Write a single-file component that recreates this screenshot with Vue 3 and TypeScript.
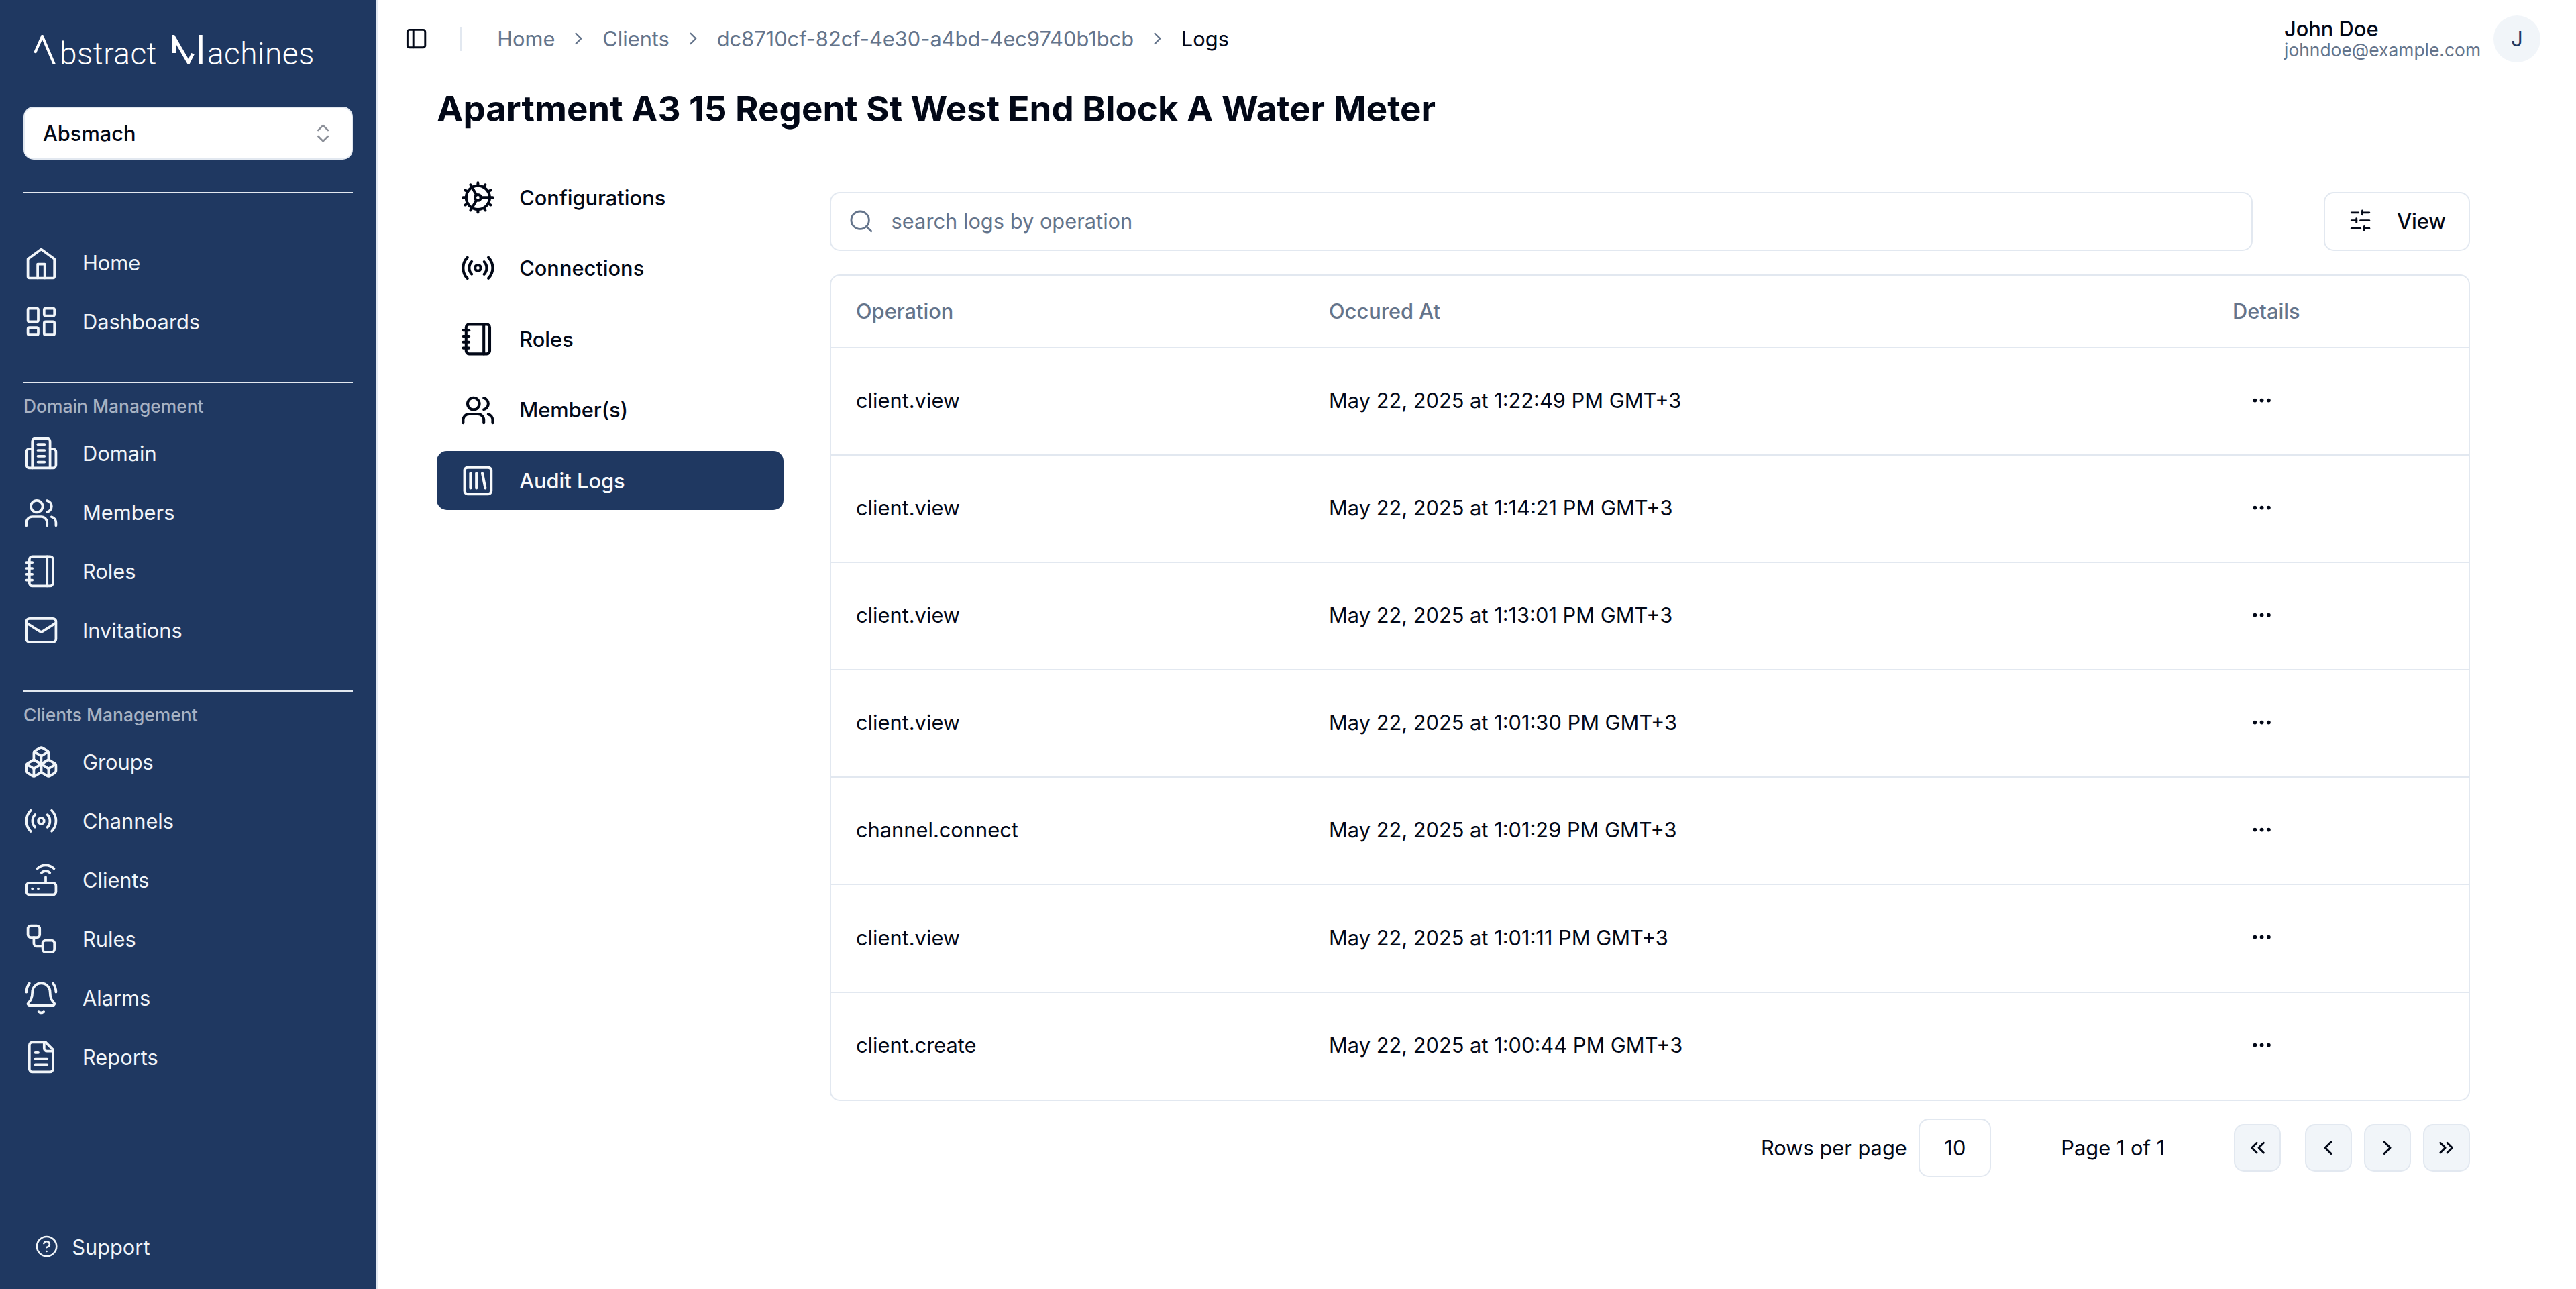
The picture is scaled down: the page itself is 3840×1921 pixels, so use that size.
<script setup lang="ts">
interface NavItem {
  label: string;
  icon: string;
}

interface LogRow {
  operation: string;
  occurredAt: string;
}

const p = (...ds: string[]) => ds.map((d) => `<path d="${d}"/>`).join('');

const icons: Record<string, string> = {
  home: p('M3 9.5 12 3l9 6.5v12a1 1 0 0 1-1 1H4a1 1 0 0 1-1-1Z', 'M9.6 22.5V13h4.8v9.5'),
  dashboards:
    '<rect width="7" height="9" x="3" y="3" rx="1"/><rect width="7" height="5" x="14" y="3" rx="1"/><rect width="7" height="9" x="14" y="12" rx="1"/><rect width="7" height="5" x="3" y="16" rx="1"/>',
  domain: p(
    'M6 22V4a2 2 0 0 1 2-2h8a2 2 0 0 1 2 2v18',
    'M6 9H4a2 2 0 0 0-2 2v9a2 2 0 0 0 2 2h16a2 2 0 0 0 2-2v-9a2 2 0 0 0-2-2h-2',
    'M9.75 6h4.5',
    'M9.75 10h4.5',
    'M9.75 14h4.5',
    'M9.75 18h4.5'
  ),
  members:
    p('M16 21v-2a4 4 0 0 0-4-4H6a4 4 0 0 0-4 4v2', 'M22 21v-2a4 4 0 0 0-3-3.87', 'M16 4.13a4 4 0 0 1 0 7.75') +
    '<circle cx="9" cy="8" r="4"/>',
  roles:
    p('M2 6h4', 'M2 10h4', 'M2 14h4', 'M2 18h4', 'M16 2v20') + '<rect width="16" height="20" x="4" y="2" rx="2"/>',
  invitations:
    '<rect width="20" height="16" x="2" y="4" rx="2"/>' + p('m22 7-8.97 5.7a1.94 1.94 0 0 1-2.06 0L2 7'),
  groups: p(
    'M2.97 12.92A2 2 0 0 0 2 14.63v3.24a2 2 0 0 0 .97 1.71l3 1.8a2 2 0 0 0 2.06 0L12 19v-5.5l-5-3-4.03 2.42Z',
    'm7 16.5-4.74-2.85',
    'm7 16.5 5-3',
    'M7 16.5v5.17',
    'M12 13.5V19l3.97 2.38a2 2 0 0 0 2.06 0l3-1.8a2 2 0 0 0 .97-1.71v-3.24a2 2 0 0 0-.97-1.71L17 10.5l-5 3Z',
    'm17 16.5-5-3',
    'm17 16.5 4.74-2.85',
    'M17 16.5v5.17',
    'M7.97 4.42A2 2 0 0 0 7 6.13v4.37l5 3 5-3V6.13a2 2 0 0 0-.97-1.71l-3-1.8a2 2 0 0 0-2.06 0l-3 1.8Z',
    'M12 8 7.26 5.15',
    'm12 8 4.74-2.85',
    'M12 13.5V8'
  ),
  channels:
    p(
      'M4.9 19.1C1 15.2 1 8.8 4.9 4.9',
      'M7.8 16.2c-2.3-2.3-2.3-6.1 0-8.5',
      'M16.2 7.8c2.3 2.3 2.3 6.1 0 8.5',
      'M19.1 4.9C23 8.8 23 15.1 19.1 19'
    ) + '<circle cx="12" cy="12" r="2"/>',
  clients:
    '<rect width="20" height="8" x="2" y="14" rx="2"/>' +
    p('M6.01 18H6', 'M10.01 18H10', 'M15 10v4', 'M17.84 7.17a4 4 0 0 0-5.66 0', 'M20.66 4.34a8 8 0 0 0-11.31 0'),
  rules:
    '<rect width="8" height="8" x="3" y="3" rx="2"/><rect width="8" height="8" x="13" y="13" rx="2"/>' +
    p('M7 11v4a2 2 0 0 0 2 2h4'),
  alarms: p(
    'M10.268 21a2 2 0 0 0 3.464 0',
    'M22 8c0-2.3-.8-4.3-2-6',
    'M3.262 15.326A1 1 0 0 0 4 17h16a1 1 0 0 0 .74-1.673C19.41 13.956 18 12.499 18 8A6 6 0 0 0 6 8c0 4.499-1.411 5.956-2.738 7.326',
    'M4 2C2.8 3.7 2 5.7 2 8'
  ),
  reports: p(
    'M15 2H6a2 2 0 0 0-2 2v16a2 2 0 0 0 2 2h12a2 2 0 0 0 2-2V7Z',
    'M14 2v4a2 2 0 0 0 2 2h4',
    'M10 9H8',
    'M16 13H8',
    'M16 17H8'
  ),
  support: '<circle cx="12" cy="12" r="10"/>' + p('M9.09 9a3 3 0 0 1 5.83 1c0 2-3 3-3 3', 'M12 17h.01'),
  cog: p(
    'M12 20a8 8 0 1 0 0-16 8 8 0 0 0 0 16Z',
    'M12 14a2 2 0 1 0 0-4 2 2 0 0 0 0 4Z',
    'M12 2v2',
    'M12 22v-2',
    'm17 20.66-1-1.73',
    'M11 10.27 7 3.34',
    'm20.66 17-1.73-1',
    'm3.34 7 1.73 1',
    'M14 12h8',
    'M2 12h2',
    'm20.66 7-1.73 1',
    'm3.34 17 1.73-1',
    'm17 3.34-1 1.73',
    'M11 13.73l-4 6.93'
  ),
  audit: '<rect width="18" height="18" x="3" y="3" rx="2"/>' + p('M7 7v10', 'M11 7v10', 'm15 7 2 10'),
  panel: '<rect width="18" height="18" x="3" y="3" rx="2"/>' + p('M9 3v18'),
  updown: p('m7 15 5 5 5-5', 'm7 9 5-5 5 5'),
  chevron: p('m9 18 6-6-6-6'),
  search: '<circle cx="11" cy="11" r="8"/>' + p('m21 21-4.3-4.3'),
  sliders: p('M21 4h-7', 'M10 4H3', 'M21 12h-9', 'M8 12H3', 'M21 20h-5', 'M12 20H3', 'M14 2v4', 'M8 10v4', 'M16 18v4'),
  dots: '<circle cx="12" cy="12" r="1"/><circle cx="19" cy="12" r="1"/><circle cx="5" cy="12" r="1"/>',
  first: p('m11 17-5-5 5-5', 'm18 17-5-5 5-5'),
  prev: p('m15 18-6-6 6-6'),
  next: p('m9 18 6-6-6-6'),
  last: p('m6 17 5-5-5-5', 'm13 17 5-5-5-5')
};

const topNav: NavItem[] = [
  { label: 'Home', icon: 'home' },
  { label: 'Dashboards', icon: 'dashboards' }
];

const domainNav: NavItem[] = [
  { label: 'Domain', icon: 'domain' },
  { label: 'Members', icon: 'members' },
  { label: 'Roles', icon: 'roles' },
  { label: 'Invitations', icon: 'invitations' }
];

const clientNav: NavItem[] = [
  { label: 'Groups', icon: 'groups' },
  { label: 'Channels', icon: 'channels' },
  { label: 'Clients', icon: 'clients' },
  { label: 'Rules', icon: 'rules' },
  { label: 'Alarms', icon: 'alarms' },
  { label: 'Reports', icon: 'reports' }
];

const tabs: NavItem[] = [
  { label: 'Configurations', icon: 'cog' },
  { label: 'Connections', icon: 'channels' },
  { label: 'Roles', icon: 'roles' },
  { label: 'Member(s)', icon: 'members' },
  { label: 'Audit Logs', icon: 'audit' }
];

const crumbs = ['Home', 'Clients', 'dc8710cf-82cf-4e30-a4bd-4ec9740b1bcb'];

const logs: LogRow[] = [
  { operation: 'client.view', occurredAt: 'May 22, 2025 at 1:22:49 PM GMT+3' },
  { operation: 'client.view', occurredAt: 'May 22, 2025 at 1:14:21 PM GMT+3' },
  { operation: 'client.view', occurredAt: 'May 22, 2025 at 1:13:01 PM GMT+3' },
  { operation: 'client.view', occurredAt: 'May 22, 2025 at 1:01:30 PM GMT+3' },
  { operation: 'channel.connect', occurredAt: 'May 22, 2025 at 1:01:29 PM GMT+3' },
  { operation: 'client.view', occurredAt: 'May 22, 2025 at 1:01:11 PM GMT+3' },
  { operation: 'client.create', occurredAt: 'May 22, 2025 at 1:00:44 PM GMT+3' }
];

const pagerButtons = ['first', 'prev', 'next', 'last'];
</script>

<template>
  <div class="page">
    <aside class="sidebar">
      <div class="logo">
        <svg class="logo-a" viewBox="0 0 32 44">
          <path d="M1 27 12 2l18 42" />
        </svg>
        <span class="logo-text">bstract</span>
        <svg class="logo-m" viewBox="0 0 46 44">
          <path d="M3.5 27V4l21.5 37 6.5-13" />
          <path class="logo-bar" d="M43 0v44" />
        </svg>
        <span class="logo-text">achines</span>
      </div>

      <button class="select" type="button">
        <span>Absmach</span>
        <svg class="icon-select" viewBox="0 0 24 24" v-html="icons.updown"></svg>
      </button>

      <div class="sep sep-first"></div>
      <nav class="nav nav-top">
        <a v-for="item in topNav" :key="item.label" class="nav-item">
          <svg class="icon-nav" viewBox="0 0 24 24" v-html="icons[item.icon]"></svg>
          <span>{{ item.label }}</span>
        </a>
      </nav>

      <div class="sep"></div>
      <div class="group-label">Domain Management</div>
      <nav class="nav">
        <a v-for="item in domainNav" :key="item.label" class="nav-item">
          <svg class="icon-nav" viewBox="0 0 24 24" v-html="icons[item.icon]"></svg>
          <span>{{ item.label }}</span>
        </a>
      </nav>

      <div class="sep"></div>
      <div class="group-label">Clients Management</div>
      <nav class="nav">
        <a v-for="item in clientNav" :key="item.label" class="nav-item">
          <svg class="icon-nav" viewBox="0 0 24 24" v-html="icons[item.icon]"></svg>
          <span>{{ item.label }}</span>
        </a>
      </nav>

      <a class="support">
        <svg class="icon-support" viewBox="0 0 24 24" v-html="icons.support"></svg>
        <span>Support</span>
      </a>
    </aside>

    <main class="main">
      <header class="topbar">
        <svg class="icon-panel" viewBox="0 0 24 24" v-html="icons.panel"></svg>
        <div class="vline"></div>
        <ol class="crumbs">
          <template v-for="crumb in crumbs" :key="crumb">
            <li>{{ crumb }}</li>
            <li class="crumb-sep">
              <svg class="icon-chevron" viewBox="0 0 24 24" v-html="icons.chevron"></svg>
            </li>
          </template>
          <li class="crumb-current">Logs</li>
        </ol>
        <div class="user">
          <div class="user-text">
            <div class="user-name">John Doe</div>
            <div class="user-mail">johndoe@example.com</div>
          </div>
          <div class="avatar">J</div>
        </div>
      </header>

      <section class="content">
        <h1 class="title">Apartment A3 15 Regent St West End Block A Water Meter</h1>

        <div class="body">
          <ul class="tabs">
            <li v-for="tab in tabs" :key="tab.label" class="tab" :class="{ active: tab.label === 'Audit Logs' }">
              <svg class="icon-nav" viewBox="0 0 24 24" v-html="icons[tab.icon]"></svg>
              <span>{{ tab.label }}</span>
            </li>
          </ul>

          <div class="pane">
            <div class="toolbar">
              <label class="search">
                <svg class="icon-search" viewBox="0 0 24 24" v-html="icons.search"></svg>
                <input type="text" placeholder="search logs by operation" />
              </label>
              <button class="view-btn" type="button">
                <svg class="icon-sliders" viewBox="0 0 24 24" v-html="icons.sliders"></svg>
                <span>View</span>
              </button>
            </div>

            <div class="table-wrap">
              <table class="table">
                <colgroup>
                  <col class="col-op" />
                  <col class="col-at" />
                  <col />
                </colgroup>
                <thead>
                  <tr>
                    <th>Operation</th>
                    <th>Occured At</th>
                    <th>Details</th>
                  </tr>
                </thead>
                <tbody>
                  <tr v-for="(row, i) in logs" :key="i">
                    <td>{{ row.operation }}</td>
                    <td>{{ row.occurredAt }}</td>
                    <td>
                      <svg class="icon-dots" viewBox="0 0 24 24" v-html="icons.dots"></svg>
                    </td>
                  </tr>
                </tbody>
              </table>
            </div>

            <div class="pager">
              <span>Rows per page</span>
              <div class="page-size">10</div>
              <span class="page-info">Page 1 of 1</span>
              <div class="pager-btns">
                <button v-for="name in pagerButtons" :key="name" class="pager-btn" type="button">
                  <svg class="icon-pager" viewBox="0 0 24 24" v-html="icons[name]"></svg>
                </button>
              </div>
            </div>
          </div>
        </div>
      </section>
    </main>
  </div>
</template>

<style>
html,
body {
  margin: 0;
  background: #fff;
}
</style>

<style scoped>
* {
  box-sizing: border-box;
}

svg {
  fill: none;
  stroke: currentColor;
  stroke-width: 2;
  stroke-linecap: round;
  stroke-linejoin: round;
  flex-shrink: 0;
}

.page {
  display: flex;
  height: 1921px;
  font-family: Inter, 'Liberation Sans', sans-serif;
  font-size: 30.8px;
  color: #020817;
  overflow: hidden;
}

/* sidebar */
.sidebar {
  width: 564px;
  flex-shrink: 0;
  display: flex;
  flex-direction: column;
  padding: 0 35px 39px;
  background: #1f3861;
  border-right: 3px solid #e2e8f0;
  color: #f1f5f9;
}

.logo {
  height: 159px;
  flex-shrink: 0;
  display: flex;
  align-items: baseline;
  padding: 52px 0 0 16px;
  color: #fff;
}

.logo-a {
  width: 32px;
  height: 44px;
  margin-right: 6px;
  stroke-width: 4;
  stroke-linecap: butt;
  stroke-linejoin: miter;
}

.logo-m {
  width: 46px;
  height: 44px;
  margin: 0 7px 0 22px;
  stroke-width: 5;
  stroke-linecap: butt;
  stroke-linejoin: miter;
}

.logo-bar {
  stroke-width: 5.5;
}

.logo-text {
  font-family: Roboto, sans-serif;
  font-weight: 300;
  font-size: 46px;
  letter-spacing: 0.5px;
  line-height: 44px;
}

.select {
  height: 79px;
  flex-shrink: 0;
  display: flex;
  align-items: center;
  justify-content: space-between;
  padding: 0 25px 0 27px;
  background: #fff;
  border: 2px solid #e2e8f0;
  border-radius: 15px;
  font: inherit;
  font-weight: 500;
  color: #020817;
}

.icon-select {
  width: 35.2px;
  height: 35.2px;
  stroke-width: 1.75;
  color: #8b8f98;
}

.sep {
  height: 2px;
  flex-shrink: 0;
  margin-top: 46px;
  background: #e2e8f0;
}

.sep-first {
  margin-top: 48px;
}

.nav {
  display: flex;
  flex-direction: column;
}

.nav-top {
  margin-top: 59px;
}

.nav-item {
  height: 88px;
  display: flex;
  align-items: center;
  gap: 35.2px;
}

.icon-nav {
  width: 52.8px;
  height: 52.8px;
  stroke-width: 1.7;
}

.group-label {
  height: 40px;
  margin: 14px 0 6px;
  line-height: 40px;
  font-size: 26.4px;
  font-weight: 500;
  color: #a7b2c3;
}

.support {
  margin-top: auto;
  display: flex;
  align-items: center;
  gap: 20px;
  height: 48px;
  padding-left: 17px;
}

.icon-support {
  width: 35.2px;
  height: 35.2px;
  stroke-width: 1.75;
}

/* top bar */
.main {
  flex: 1;
  min-width: 0;
  display: flex;
  flex-direction: column;
}

.topbar {
  height: 115px;
  display: flex;
  align-items: center;
  padding: 0 53px 0 39px;
}

.icon-panel {
  width: 35.2px;
  height: 35.2px;
}

.vline {
  width: 2px;
  height: 36px;
  margin: 0 53px 0 48px;
  background: #e2e8f0;
}

.crumbs {
  display: flex;
  align-items: center;
  gap: 20px;
  margin: 0;
  padding: 0;
  list-style: none;
  color: #64748b;
}

.crumb-sep {
  display: flex;
}

.icon-chevron {
  width: 30.8px;
  height: 30.8px;
  stroke-width: 1.75;
}

.crumb-current {
  color: #020817;
}

.user {
  margin-left: auto;
  display: flex;
  align-items: center;
  gap: 19px;
}

.user-name {
  font-weight: 500;
  line-height: 32px;
  color: #020817;
}

.user-mail {
  font-size: 26.4px;
  line-height: 30px;
  color: #64748b;
}

.avatar {
  width: 70px;
  height: 70px;
  display: flex;
  align-items: center;
  justify-content: center;
  border-radius: 50%;
  background: #f1f5f9;
  color: #1f3861;
}

/* content */
.content {
  padding: 12px 158px 0 87px;
}

.title {
  margin: 0;
  font-size: 52.8px;
  line-height: 70px;
  font-weight: 700;
  color: #020817;
}

.body {
  display: flex;
  gap: 69px;
  margin-top: 53px;
}

.tabs {
  width: 517px;
  flex-shrink: 0;
  display: flex;
  flex-direction: column;
  gap: 17.6px;
  margin: 0;
  padding: 0;
  list-style: none;
}

.tab {
  height: 88px;
  display: flex;
  align-items: center;
  gap: 35.2px;
  padding-left: 35.2px;
  border-radius: 15px;
  font-weight: 500;
}

.tab .icon-nav {
  stroke-width: 1.85;
}

.tab.active {
  background: #1f3861;
  color: #f8fafc;
}

.pane {
  flex: 1;
  min-width: 0;
  padding-top: 36px;
}

.toolbar {
  display: flex;
  gap: 106px;
  height: 88px;
}

.search {
  flex: 1;
  display: flex;
  align-items: center;
  gap: 25px;
  padding-left: 25px;
  border: 2px solid #e2e8f0;
  border-radius: 15px;
  color: #64748b;
}

.icon-search {
  width: 39.6px;
  height: 39.6px;
  stroke-width: 1.75;
}

.search input {
  flex: 1;
  height: 100%;
  padding: 0 0 2px;
  border: none;
  outline: none;
  background: none;
  font: inherit;
  color: #020817;
}

.search input::placeholder {
  color: #64748b;
  opacity: 1;
}

.view-btn {
  width: 218px;
  display: flex;
  align-items: center;
  gap: 37px;
  padding: 0 0 2px 35px;
  background: #fff;
  border: 2px solid #e2e8f0;
  border-radius: 15px;
  font: inherit;
  font-weight: 500;
  color: #020817;
}

.icon-sliders {
  width: 35.2px;
  height: 35.2px;
}

.table-wrap {
  margin-top: 35px;
  border: 2px solid #e2e8f0;
  border-radius: 15px;
  overflow: hidden;
}

.table {
  width: 100%;
  table-layout: fixed;
  border-collapse: collapse;
}

.col-op {
  width: 705px;
}

.col-at {
  width: 1347px;
}

.table th {
  height: 106.5px;
  padding: 0 0 0 37px;
  text-align: left;
  font-weight: 500;
  color: #64748b;
}

.table td {
  height: 160.2px;
  padding: 0 0 3px 37px;
  border-top: 2px solid #e2e8f0;
}

.icon-dots {
  display: block;
  width: 35.2px;
  height: 35.2px;
  margin-left: 25.5px;
}

.pager {
  display: flex;
  align-items: center;
  justify-content: flex-end;
  margin-top: 26px;
}

.page-size {
  width: 108px;
  height: 87px;
  display: flex;
  align-items: center;
  justify-content: center;
  margin-left: 17.6px;
  border: 2px solid #e2e8f0;
  border-radius: 15px;
}

.page-info {
  margin-left: 104px;
}

.pager-btns {
  display: flex;
  gap: 17.6px;
  margin-left: 103px;
}

.pager-btn {
  width: 70.4px;
  height: 70.4px;
  display: flex;
  align-items: center;
  justify-content: center;
  padding: 0;
  background: #f1f5f9;
  border: 2px solid #e2e8f0;
  border-radius: 15px;
  color: #020817;
}

.pager-btn:first-child {
  margin-right: 17.6px;
}

.icon-pager {
  width: 35.2px;
  height: 35.2px;
}
</style>
